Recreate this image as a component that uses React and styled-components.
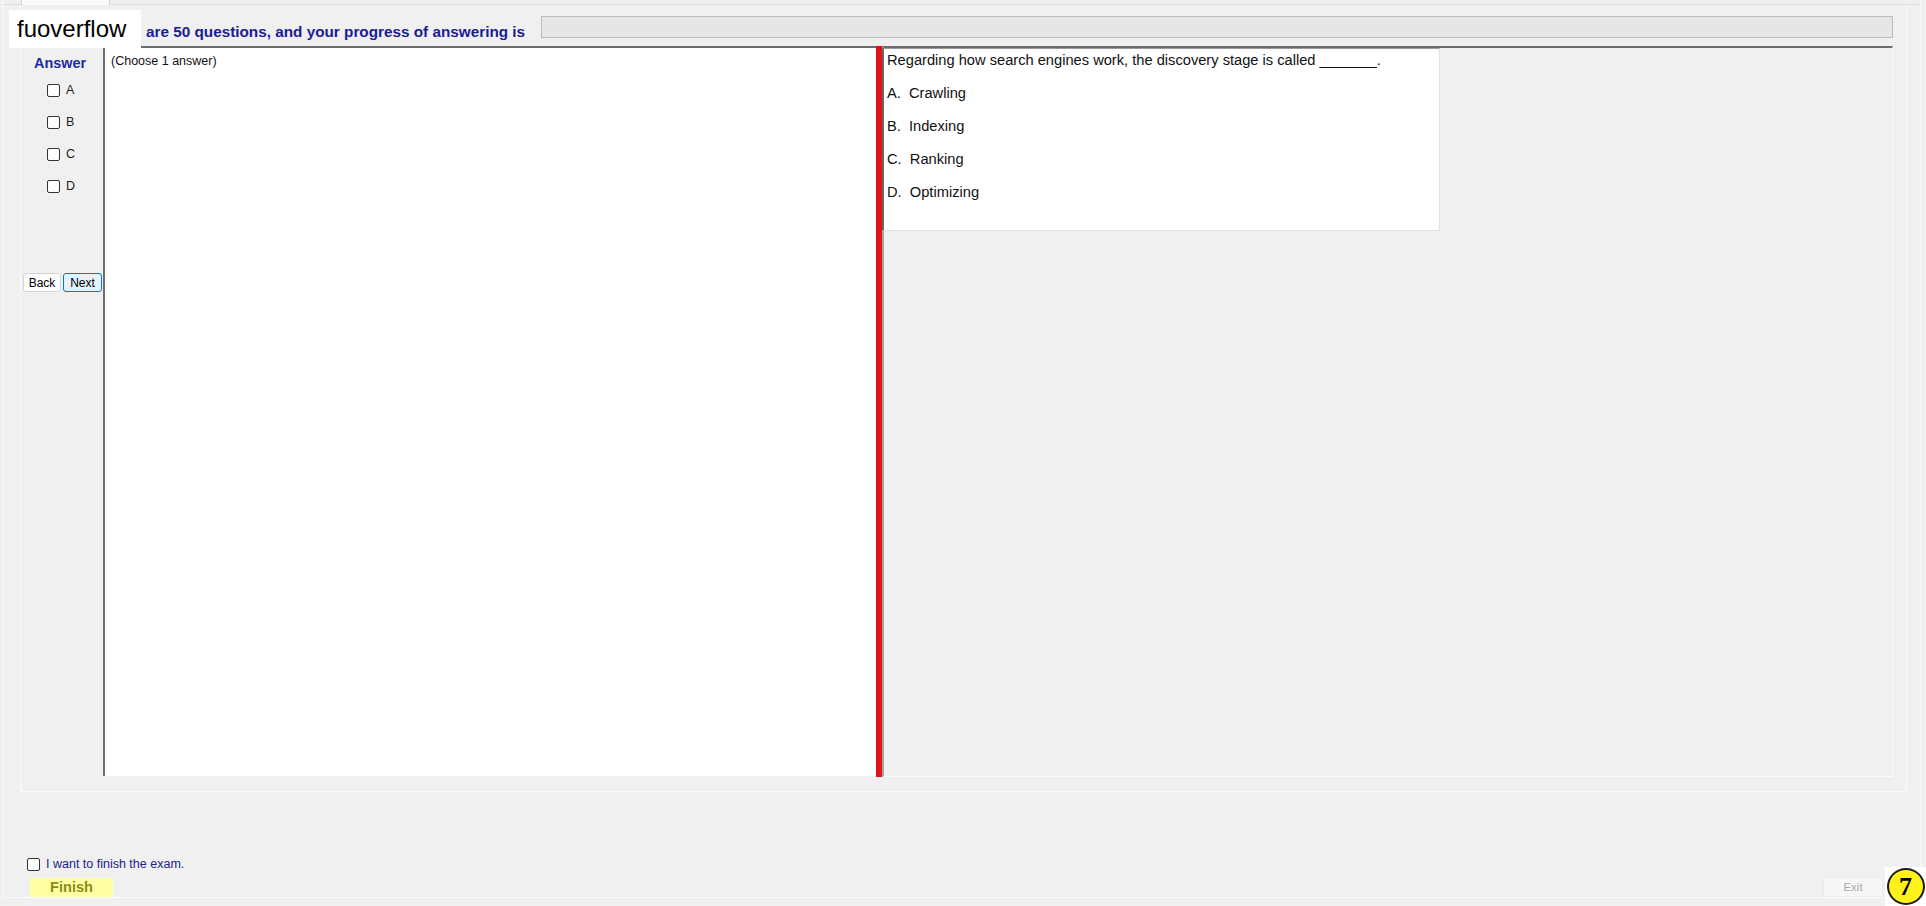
import React from "react";
import styled, { createGlobalStyle } from "styled-components";

const GlobalStyle = createGlobalStyle`
  html, body { margin: 0; padding: 0; background: #f0f0f0; }
  body { font-family: "Liberation Sans", Arial, sans-serif; }
  *, *::before, *::after { box-sizing: border-box; }
`;

const Window = styled.div`
  position: relative;
  width: 1926px;
  height: 906px;
  overflow: hidden;
  background: #f0f0f0;
  padding-left: 3px;
`;

const Frame = styled.div`
  width: 1918px;
  height: 898px;
  border-left: 1px solid #fbfbfb;
  border-right: 1px solid #fbfbfb;
  border-bottom: 1px solid #fbfbfb;
  display: flex;
  flex-direction: column;
`;

const TabStrip = styled.div`
  height: 5px;
  padding-left: 17px;
  border-bottom: 1px solid #dcdcdc;
  display: flex;
`;

const Tab = styled.div`
  width: 89px;
  height: 5px;
  background: #fafafa;
  border-left: 1px solid #d2d2d2;
  border-right: 1px solid #d2d2d2;
`;

const TabPage = styled.div`
  margin-left: 16px;
  width: 1887px;
  height: 787px;
  border: 1px solid #fbfbfb;
  border-top: none;
  display: flex;
  flex-direction: column;
`;

const Header = styled.div`
  height: 41px;
  display: flex;
  align-items: flex-start;
  padding-right: 13px;
`;

const HeaderText = styled.div`
  margin-left: 125px;
  margin-top: 18px;
  width: 395px;
  flex: 0 0 395px;
  font-weight: bold;
  font-size: 15.3px;
  line-height: 17px;
  color: #1c1c94;
  white-space: nowrap;
`;

const ProgressBar = styled.div`
  flex: 1;
  margin-top: 11px;
  height: 22px;
  background: #e6e6e6;
  border: 1px solid #bcbcbc;
`;

const ContentRow = styled.div`
  display: flex;
  height: 731px;
  padding-right: 13px;
`;

const Sidebar = styled.div`
  width: 82px;
  flex: 0 0 82px;
  display: flex;
  flex-direction: column;
`;

const AnswerLabel = styled.div`
  margin-top: 9px;
  padding-left: 13px;
  font-weight: bold;
  font-size: 14.4px;
  line-height: 16px;
  color: #1b2aa0;
`;

const OptionList = styled.div`
  margin-top: 3px;
  display: flex;
  flex-direction: column;
`;

const OptionRow = styled.label`
  height: 32px;
  display: flex;
  align-items: center;
  gap: 6px;
  padding-left: 26px;
  font-size: 12.5px;
  color: #222;
`;

const CheckBox = styled.span`
  display: inline-block;
  width: 13px;
  height: 13px;
  flex: 0 0 13px;
  background: #fff;
  border: 1px solid #333;
  border-radius: 2px;
`;

const ButtonRow = styled.div`
  margin-top: 71px;
  padding-left: 2px;
  display: flex;
  gap: 2px;
`;

const NavButton = styled.button`
  height: 19px;
  width: ${(p) => p.$w}px;
  padding: 0;
  font-family: "Liberation Sans", Arial, sans-serif;
  font-size: 12px;
  color: #000;
  background: ${(p) => (p.$active ? "#e5f1fb" : "#fdfdfd")};
  border: 1px solid ${(p) => (p.$active ? "#0078d7" : "#d4d4d4")};
  border-radius: 3px;
`;

const MiddlePanel = styled.div`
  width: 773px;
  flex: 0 0 773px;
  background: #fff;
  border-left: 2px solid #6d6d6d;
  border-top: 2px solid #6d6d6d;
  margin-bottom: 1px;
  padding: 6px 0 0 6px;
  font-size: 12.5px;
  line-height: 15px;
  color: #111;
`;

const Splitter = styled.div`
  width: 6px;
  flex: 0 0 6px;
  background: #e0151b;
  border-left: 1px solid #c41016;
`;

const RightPanel = styled.div`
  flex: 1;
  border-top: 2px solid #6d6d6d;
  border-left: 2px solid #a4a4a4;
  border-right: 1px solid #fbfbfb;
  border-bottom: 1px solid #fbfbfb;
`;

const QuestionBox = styled.div`
  margin-left: -2px;
  width: 558px;
  height: 183px;
  background: #fff;
  border-left: 2px solid #666;
  border-top: 1px solid #9a9a9a;
  border-right: 1px solid #e2e2e2;
  border-bottom: 1px solid #e2e2e2;
  padding: 0 0 0 3px;
  font-size: 14.67px;
  line-height: 17px;
  color: #111;
`;

const QuestionLine = styled.div`
  margin-top: ${(p) => p.$gap}px;
  white-space: pre;
`;

const Footer = styled.div`
  flex: 1;
  display: flex;
  justify-content: space-between;
  align-items: flex-end;
  padding: 0 37px 0 23px;
`;

const FinishColumn = styled.div`
  display: flex;
  flex-direction: column;
`;

const FinishCheck = styled.label`
  display: flex;
  align-items: center;
  gap: 6px;
  font-size: 12.5px;
  line-height: 14px;
  color: #1c1c8c;
`;

const FinishButton = styled.div`
  margin-top: 7px;
  margin-left: 3px;
  width: 83px;
  height: 19px;
  background: #ffffa6;
  color: #8c8c14;
  font-weight: bold;
  font-size: 14.6px;
  line-height: 19px;
  text-align: center;
`;

const ExitButton = styled.div`
  width: 60px;
  height: 20px;
  background: #f7f7f7;
  border: 1px solid #ebebeb;
  color: #a8a8a8;
  font-size: 11.5px;
  line-height: 18px;
  text-align: center;
`;

const Watermark = styled.div`
  position: absolute;
  left: 9px;
  top: 10px;
  width: 132px;
  height: 38px;
  background: #fff;
  padding-left: 8px;
  font-size: 24px;
  line-height: 38px;
  color: #000;
`;

const Badge = styled.div`
  position: absolute;
  left: 1885px;
  top: 867px;
  width: 41px;
  height: 39px;
  background: #fff;
  display: flex;
  align-items: center;
  justify-content: center;
`;

const BadgeCircle = styled.div`
  width: 38px;
  height: 37px;
  border-radius: 50%;
  background: #fff21a;
  border: 2px solid #1a1a1a;
  display: flex;
  align-items: center;
  justify-content: center;
  font-family: "Liberation Serif", "Times New Roman", serif;
  font-weight: bold;
  font-size: 26px;
  color: #000;
`;

const options = ["A", "B", "C", "D"];
const answers = [
  "A.  Crawling",
  "B.  Indexing",
  "C.  Ranking",
  "D.  Optimizing",
];

export default function App() {
  return (
    <>
      <GlobalStyle />
      <Window>
        <Frame>
          <TabStrip>
            <Tab />
          </TabStrip>
          <TabPage>
            <Header>
              <HeaderText>are 50 questions, and your progress of answering is</HeaderText>
              <ProgressBar />
            </Header>
            <ContentRow>
              <Sidebar>
                <AnswerLabel>Answer</AnswerLabel>
                <OptionList>
                  {options.map((o) => (
                    <OptionRow key={o}>
                      <CheckBox />
                      {o}
                    </OptionRow>
                  ))}
                </OptionList>
                <ButtonRow>
                  <NavButton $w={38}>Back</NavButton>
                  <NavButton $w={39} $active>Next</NavButton>
                </ButtonRow>
              </Sidebar>
              <MiddlePanel>(Choose 1 answer)</MiddlePanel>
              <Splitter />
              <RightPanel>
                <QuestionBox>
                  <QuestionLine $gap={3}>
                    Regarding how search engines work, the discovery stage is called _______.
                  </QuestionLine>
                  {answers.map((a) => (
                    <QuestionLine key={a} $gap={16}>
                      {a}
                    </QuestionLine>
                  ))}
                </QuestionBox>
              </RightPanel>
            </ContentRow>
          </TabPage>
          <Footer>
            <FinishColumn>
              <FinishCheck>
                <CheckBox />
                I want to finish the exam.
              </FinishCheck>
              <FinishButton>Finish</FinishButton>
            </FinishColumn>
            <ExitButton>Exit</ExitButton>
          </Footer>
        </Frame>
        <Watermark>fuoverflow</Watermark>
        <Badge>
          <BadgeCircle>7</BadgeCircle>
        </Badge>
      </Window>
    </>
  );
}
